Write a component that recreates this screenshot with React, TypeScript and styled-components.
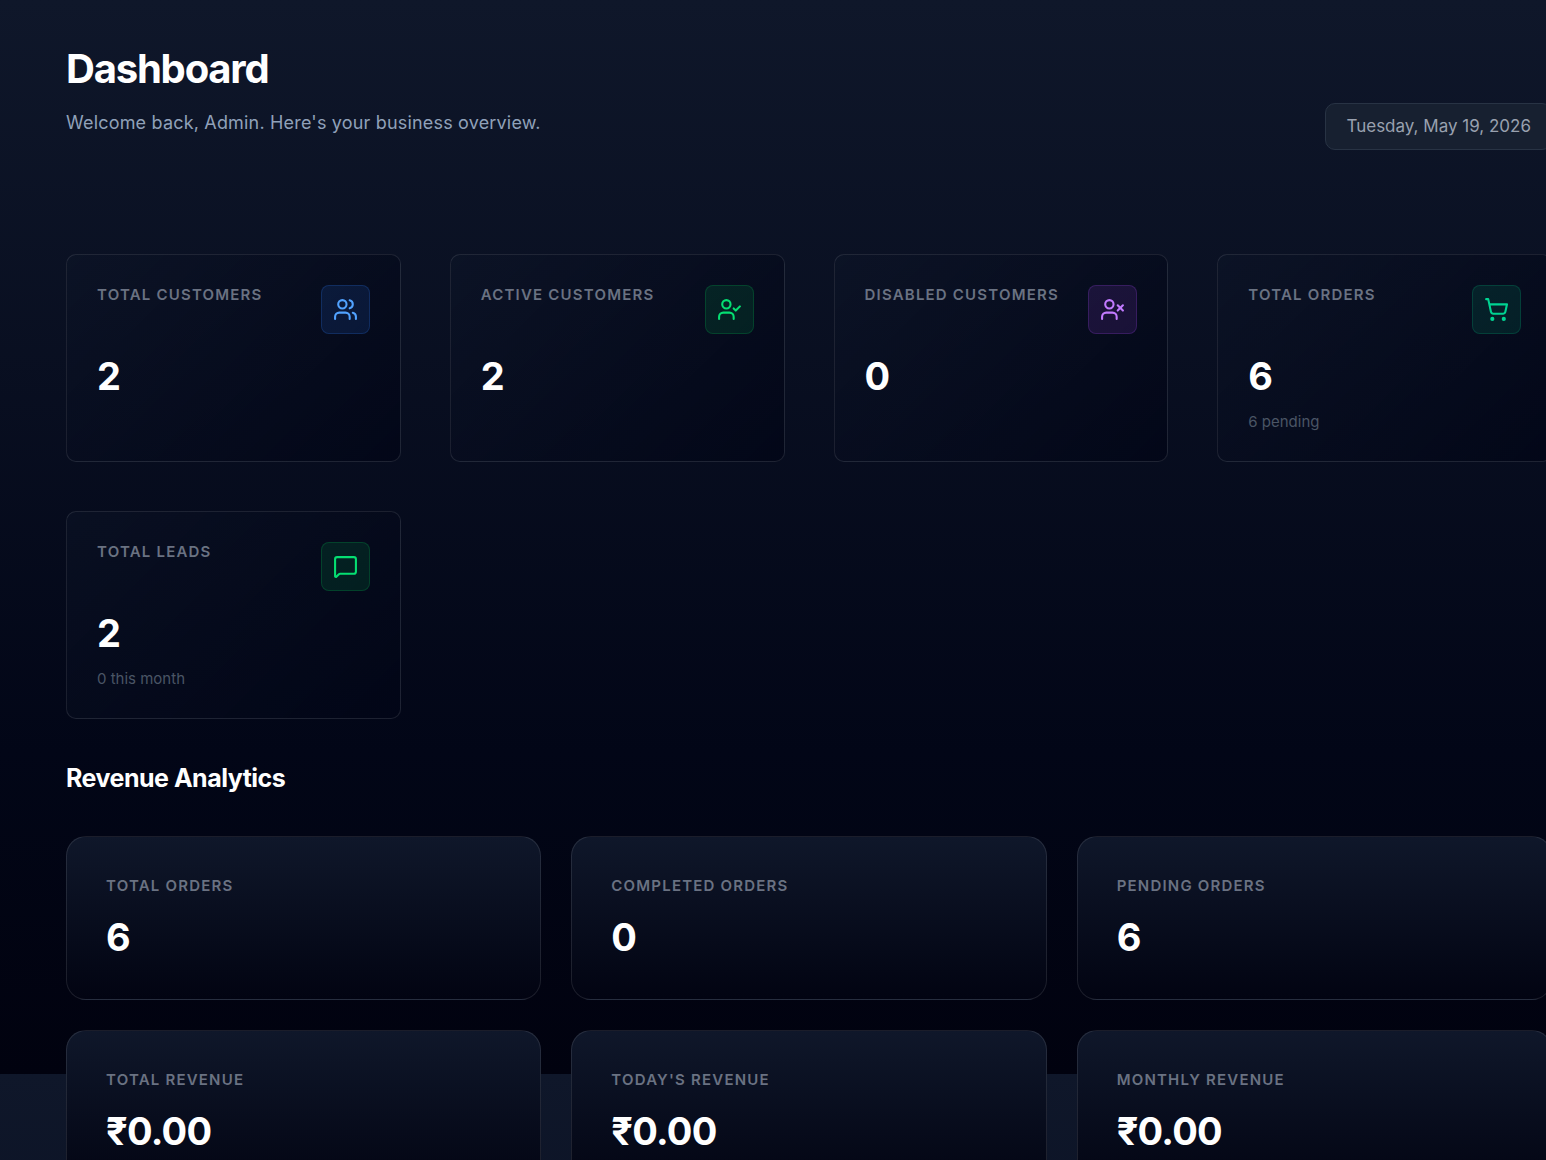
import React from "react";
import styled, { createGlobalStyle } from "styled-components";
import { Users, UserCheck, UserX, ShoppingCart, MessageSquare, type LucideIcon } from "lucide-react";

const GlobalStyle = createGlobalStyle`
  * { box-sizing: border-box; }
  body {
    margin: 0;
    color: #ffffff;
    font-family: Inter, "Liberation Sans", sans-serif;
    background-color: #01020f;
    background-image: linear-gradient(180deg, #0f172a 0%, #020617 70%, #01020f 100%);
    background-size: 100% 1074px;
  }
  h1, h2, h3, p { margin: 0; }
`;

const Viewport = styled.div`
  height: 100vh;
  overflow: hidden;
`;

const Page = styled.main`
  width: calc(100% - 60px);
  margin-left: 66px;
  padding-top: 45px;
`;

const Header = styled.header`
  display: flex;
  justify-content: space-between;
  align-items: flex-end;
  margin-bottom: 104px;
`;

const Heading = styled.div`
  padding-bottom: 13px;
`;

const Title = styled.h1`
  font-size: 40px;
  line-height: 48px;
  font-weight: 700;
  letter-spacing: -0.03em;
`;

const Subtitle = styled.p`
  margin-top: 16px;
  font-size: 18px;
  line-height: 28px;
  letter-spacing: 0.01em;
  color: #90a1b9;
`;

const DateBadge = styled.time`
  padding: 10px 20px;
  border: 1px solid #283344;
  border-radius: 10px;
  background: #172030;
  color: #99a1af;
  font-size: 17px;
  line-height: 25px;
  white-space: nowrap;
`;

const StatGrid = styled.section`
  display: grid;
  grid-template-columns: repeat(4, 1fr);
  gap: 49px;
`;

const StatCard = styled.article`
  display: flex;
  justify-content: space-between;
  align-items: flex-start;
  min-height: 208px;
  padding: 30px;
  border: 1px solid rgba(255, 255, 255, 0.1);
  border-radius: 10px;
  background: linear-gradient(135deg, rgba(15, 23, 42, 0.4), rgba(2, 6, 23, 0.8));
`;

const Label = styled.h3`
  font-size: 15px;
  line-height: 20px;
  font-weight: 600;
  letter-spacing: 0.08em;
  text-transform: uppercase;
  color: #6a7282;
`;

const Value = styled.p<{ $gap: number }>`
  margin-top: ${(p) => p.$gap}px;
  font-size: 38px;
  line-height: 46px;
  font-weight: 700;
  letter-spacing: -0.02em;
`;

const Note = styled.p`
  margin-top: 14px;
  font-size: 15px;
  line-height: 18px;
  color: #4a5565;
`;

const IconBox = styled.div<{ $tint: string; $color: string }>`
  display: grid;
  place-items: center;
  flex: none;
  width: 49px;
  height: 49px;
  border: 1px solid rgba(${(p) => p.$tint}, 0.2);
  border-radius: 8px;
  background: rgba(${(p) => p.$tint}, 0.12);
  color: ${(p) => p.$color};
`;

const SectionTitle = styled.h2`
  margin: 42px 0 41px;
  font-size: 25px;
  line-height: 34px;
  font-weight: 700;
  letter-spacing: -0.02em;
`;

const RevenueGrid = styled.section`
  display: grid;
  grid-template-columns: repeat(3, 1fr);
  gap: 30px;
`;

const RevenueCard = styled.article`
  padding: 39px;
  border: 1px solid rgba(255, 255, 255, 0.1);
  border-radius: 20px;
  background: linear-gradient(180deg, #0f172a, #020412);
`;

type Stat = { label: string; value: string; note?: string; icon: LucideIcon; tint: string; color: string };

const stats: Stat[] = [
  { label: "Total Customers", value: "2", icon: Users, tint: "43, 127, 255", color: "#51a2ff" },
  { label: "Active Customers", value: "2", icon: UserCheck, tint: "0, 201, 80", color: "#05df72" },
  { label: "Disabled Customers", value: "0", icon: UserX, tint: "173, 70, 255", color: "#c27aff" },
  { label: "Total Orders", value: "6", note: "6 pending", icon: ShoppingCart, tint: "0, 188, 125", color: "#00d492" },
  { label: "Total Leads", value: "2", note: "0 this month", icon: MessageSquare, tint: "0, 201, 80", color: "#05df72" },
];

const revenue = [
  { label: "Total Orders", value: "6" },
  { label: "Completed Orders", value: "0" },
  { label: "Pending Orders", value: "6" },
  { label: "Total Revenue", value: "₹0.00" },
  { label: "Today's Revenue", value: "₹0.00" },
  { label: "Monthly Revenue", value: "₹0.00" },
];

export default function App() {
  return (
    <Viewport>
      <GlobalStyle />
      <Page>
        <Header>
          <Heading>
            <Title>Dashboard</Title>
            <Subtitle>Welcome back, Admin. Here's your business overview.</Subtitle>
          </Heading>
          <DateBadge dateTime="2026-05-19">Tuesday, May 19, 2026</DateBadge>
        </Header>
        <StatGrid>
          {stats.map(({ label, value, note, icon: Icon, tint, color }) => (
            <StatCard key={label}>
              <div>
                <Label>{label}</Label>
                <Value $gap={48}>{value}</Value>
                {note && <Note>{note}</Note>}
              </div>
              <IconBox $tint={tint} $color={color}>
                <Icon size={25} aria-hidden />
              </IconBox>
            </StatCard>
          ))}
        </StatGrid>
        <SectionTitle>Revenue Analytics</SectionTitle>
        <RevenueGrid>
          {revenue.map(({ label, value }) => (
            <RevenueCard key={label}>
              <Label>{label}</Label>
              <Value $gap={18}>{value}</Value>
            </RevenueCard>
          ))}
        </RevenueGrid>
      </Page>
    </Viewport>
  );
}
